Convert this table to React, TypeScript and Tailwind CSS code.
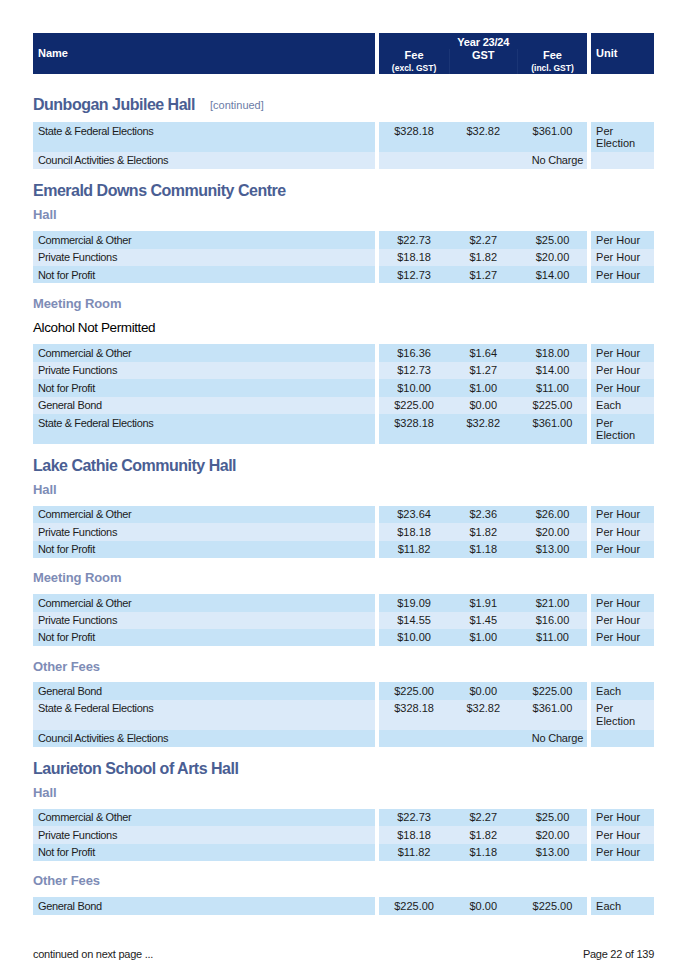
import React from 'react';

type Row = {
  name: string;
  excl?: string;
  gst?: string;
  incl?: string;
  unit?: string;
  noCharge?: boolean;
};

type Block =
  | { kind: 'heading'; text: string; continued?: boolean; first?: boolean }
  | { kind: 'sub'; text: string; afterHeading?: boolean }
  | { kind: 'note'; text: string }
  | { kind: 'table'; rows: Row[]; tight?: boolean };

const hire = (a: string[], b: string[], c: string[]): Row[] => [
  { name: 'Commercial & Other', excl: a[0], gst: a[1], incl: a[2], unit: 'Per Hour' },
  { name: 'Private Functions', excl: b[0], gst: b[1], incl: b[2], unit: 'Per Hour' },
  { name: 'Not for Profit', excl: c[0], gst: c[1], incl: c[2], unit: 'Per Hour' },
];

const bond: Row = { name: 'General Bond', excl: '$225.00', gst: '$0.00', incl: '$225.00', unit: 'Each' };
const elections: Row = {
  name: 'State & Federal Elections',
  excl: '$328.18',
  gst: '$32.82',
  incl: '$361.00',
  unit: 'Per Election',
};
const council: Row = { name: 'Council Activities & Elections', noCharge: true };

const blocks: Block[] = [
  { kind: 'heading', text: 'Dunbogan Jubilee Hall', continued: true, first: true },
  { kind: 'table', rows: [elections, council], tight: true },

  { kind: 'heading', text: 'Emerald Downs Community Centre' },
  { kind: 'sub', text: 'Hall', afterHeading: true },
  { kind: 'table', rows: hire(['$22.73', '$2.27', '$25.00'], ['$18.18', '$1.82', '$20.00'], ['$12.73', '$1.27', '$14.00']) },
  { kind: 'sub', text: 'Meeting Room' },
  { kind: 'note', text: 'Alcohol Not Permitted' },
  {
    kind: 'table',
    rows: [
      ...hire(['$16.36', '$1.64', '$18.00'], ['$12.73', '$1.27', '$14.00'], ['$10.00', '$1.00', '$11.00']),
      bond,
      elections,
    ],
  },

  { kind: 'heading', text: 'Lake Cathie Community Hall' },
  { kind: 'sub', text: 'Hall', afterHeading: true },
  { kind: 'table', rows: hire(['$23.64', '$2.36', '$26.00'], ['$18.18', '$1.82', '$20.00'], ['$11.82', '$1.18', '$13.00']) },
  { kind: 'sub', text: 'Meeting Room' },
  { kind: 'table', rows: hire(['$19.09', '$1.91', '$21.00'], ['$14.55', '$1.45', '$16.00'], ['$10.00', '$1.00', '$11.00']) },
  { kind: 'sub', text: 'Other Fees' },
  { kind: 'table', rows: [bond, elections, council] },

  { kind: 'heading', text: 'Laurieton School of Arts Hall' },
  { kind: 'sub', text: 'Hall', afterHeading: true },
  { kind: 'table', rows: hire(['$22.73', '$2.27', '$25.00'], ['$18.18', '$1.82', '$20.00'], ['$11.82', '$1.18', '$13.00']) },
  { kind: 'sub', text: 'Other Fees' },
  { kind: 'table', rows: [bond] },
];

const HeaderRow = () => (
  <div className="flex gap-[4px] h-[41px] text-white font-bold text-[11px]">
    <div className="w-[343px] bg-[#0f2a6d] flex items-center pl-[5px]">Name</div>
    <div className="w-[208px] bg-[#0f2a6d] pt-[2px] flex flex-col">
      <div className="text-center leading-[14px] tracking-[-0.2px]">Year 23/24</div>
      <div className="grid grid-cols-3 flex-1">
        <div className="text-center">
          <div className="leading-[13px]">Fee</div>
          <div className="text-[8.5px] leading-[12px]">(excl. GST)</div>
        </div>
        <div className="text-center border-x border-[#1a3576]">
          <div className="leading-[13px]">GST</div>
        </div>
        <div className="text-center">
          <div className="leading-[13px]">Fee</div>
          <div className="text-[8.5px] leading-[12px]">(incl. GST)</div>
        </div>
      </div>
    </div>
    <div className="w-[63px] bg-[#0f2a6d] flex items-center pl-[5px]">Unit</div>
  </div>
);

const FeeTable = ({ rows }: { rows: Row[] }) => (
  <div className="flex flex-col text-[11px] leading-[12.4px] text-[#1c1c1c]">
    {rows.map((r, i) => {
      const bg = i % 2 === 0 ? 'bg-[#c6e3f7]' : 'bg-[#dbeaf9]';
      return (
        <div key={i} className="flex gap-[4px]">
          <div className={`w-[343px] ${bg} py-[2.5px] pl-[5px] tracking-[-0.35px]`}>{r.name}</div>
          {r.noCharge ? (
            <div className={`w-[208px] ${bg} py-[2.5px] pr-[4px] text-right tracking-[-0.2px]`}>No Charge</div>
          ) : (
            <div className={`w-[208px] ${bg} py-[2.5px] grid grid-cols-3 text-center`}>
              <div>{r.excl}</div>
              <div>{r.gst}</div>
              <div>{r.incl}</div>
            </div>
          )}
          <div className={`w-[63px] ${bg} py-[2.5px] pl-[5px] pr-[2px]`}>{r.unit}</div>
        </div>
      );
    })}
  </div>
);

export default function App() {
  return (
    <div
      className="w-[687px] h-[971px] bg-white flex flex-col px-[33px] pt-[33px]"
      style={{ fontFamily: '"Liberation Sans", Arial, sans-serif' }}
    >
      <HeaderRow />

      {blocks.map((b, i) => {
        if (b.kind === 'heading') {
          return (
            <div
              key={i}
              className={`${b.first ? 'mt-[21px]' : 'mt-[12px]'} h-[20px] flex items-center text-[16px] tracking-[-0.5px] font-bold text-[#4a5e93]`}
            >
              {b.text}
              {b.continued && (
                <span className="ml-[15px] text-[11px] tracking-normal font-normal text-[#6b7ba6]">[continued]</span>
              )}
            </div>
          );
        }
        if (b.kind === 'sub') {
          return (
            <div
              key={i}
              className={`${b.afterHeading ? 'mt-[6px]' : 'mt-[12px]'} h-[16px] flex items-center text-[13px] tracking-[-0.1px] font-bold text-[#7e8cb6]`}
            >
              {b.text}
            </div>
          );
        }
        if (b.kind === 'note') {
          return (
            <div key={i} className="mt-[8px] h-[17px] flex items-center text-[13.5px] tracking-[-0.4px] text-black">
              {b.text}
            </div>
          );
        }
        return (
          <div key={i} className={b.tight ? 'mt-[7px]' : 'mt-[8px]'}>
            <FeeTable rows={b.rows} />
          </div>
        );
      })}

      <div className="mt-auto pb-[10px] flex justify-between text-[11px] leading-[13px] tracking-[-0.25px] text-[#1c1c1c]">
        <span>continued on next page ...</span>
        <span>Page 22 of 139</span>
      </div>
    </div>
  );
}
